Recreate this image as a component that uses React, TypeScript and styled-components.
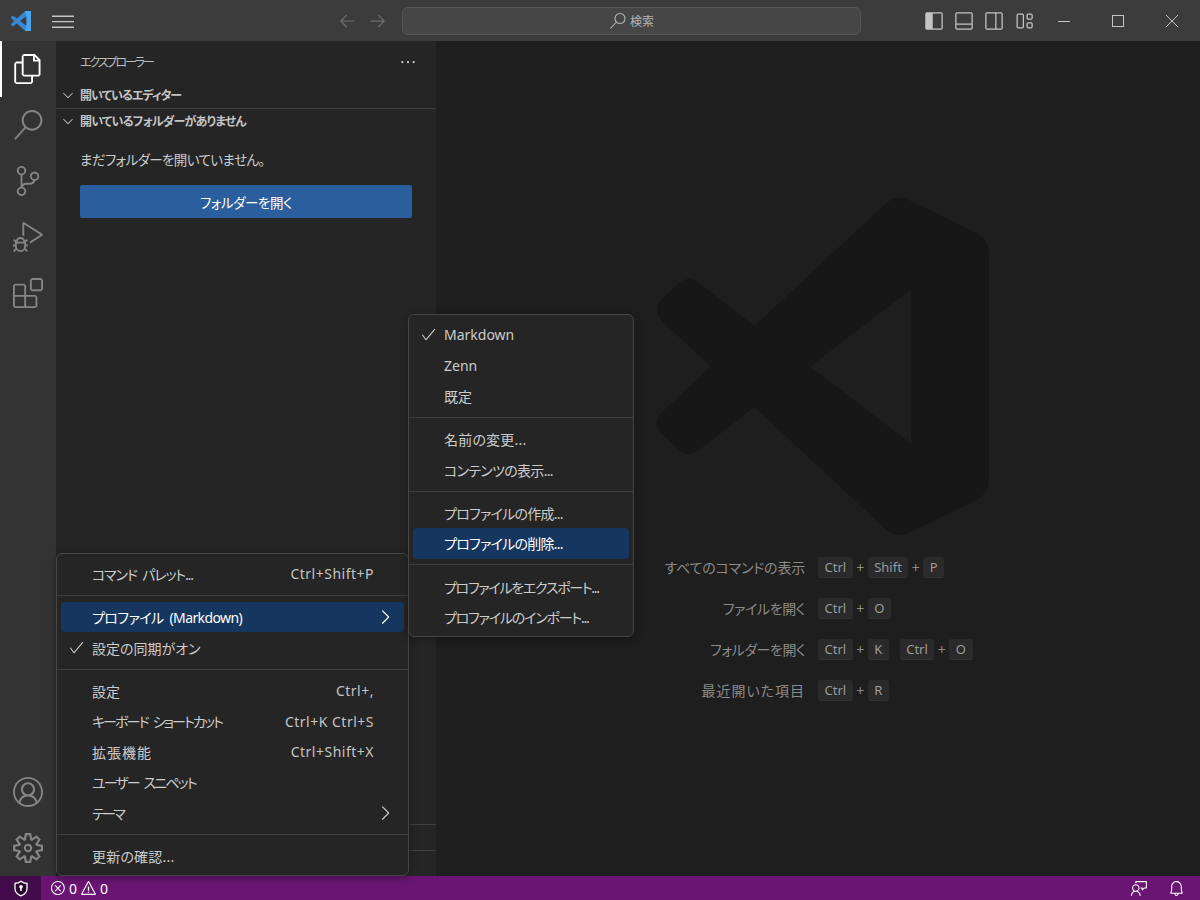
import React from "react";
import styled, { createGlobalStyle } from "styled-components";
import {
  VscAccount,
  VscArrowLeft,
  VscArrowRight,
  VscBell,
  VscCheck,
  VscChevronDown,
  VscChevronRight,
  VscDebugAlt,
  VscEllipsis,
  VscError,
  VscExtensions,
  VscFeedback,
  VscFiles,
  VscLayout,
  VscLayoutPanelOff,
  VscLayoutSidebarLeft,
  VscLayoutSidebarRightOff,
  VscMenu,
  VscSearch,
  VscSettingsGear,
  VscSourceControl,
  VscWarning,
} from "react-icons/vsc";

const LOGO_PATH =
  "M23.15 2.587L18.21.21a1.494 1.494 0 0 0-1.705.29l-9.46 8.63-4.12-3.128a.999.999 0 0 0-1.276.057L.327 7.261A1 1 0 0 0 .326 8.74L3.899 12 .326 15.26a1 1 0 0 0 .001 1.479L1.65 17.94a.999.999 0 0 0 1.276.057l4.12-3.128 9.46 8.63a1.492 1.492 0 0 0 1.704.29l4.942-2.377A1.5 1.5 0 0 0 24 20.06V3.939a1.5 1.5 0 0 0-.85-1.352zm-4.79 14.861L11.06 12l7.3-5.448v10.896z";

const GlobalStyle = createGlobalStyle`
  body {
    margin: 0;
    background: #1e1e1e;
    font-family: "Noto Sans", "Noto Sans CJK JP", sans-serif;
    font-feature-settings: "palt";
    color: #cccccc;
  }
`;

const Window = styled.div`
  position: relative;
  display: flex;
  flex-direction: column;
  width: 1200px;
  height: 900px;
  overflow: hidden;
`;

const TitleBar = styled.header`
  display: flex;
  align-items: center;
  flex: none;
  height: 41px;
  padding-right: 1px;
  background: #3c3c3c;
`;

const LeftGroup = styled.div`
  display: flex;
  align-items: center;
  width: 332px;
`;

const LogoBox = styled.div`
  display: flex;
  align-items: center;
  justify-content: center;
  width: 41px;
`;

const IconSlot = styled.div<{ $w?: number; $color?: string }>`
  display: flex;
  align-items: center;
  justify-content: center;
  flex: none;
  width: ${({ $w }) => $w ?? 30}px;
  color: ${({ $color }) => $color ?? "#c4c4c4"};
`;

const SearchBox = styled.div`
  display: flex;
  align-items: center;
  justify-content: center;
  gap: 3px;
  flex: none;
  box-sizing: border-box;
  width: 459px;
  height: 28px;
  margin-left: 10px;
  background: #464646;
  border: 1px solid #565656;
  border-radius: 6px;
  font-size: 12px;
  color: #b4b4b4;
`;

const Spacer = styled.div`
  flex: 1;
`;

const LayoutIcons = styled.div`
  display: flex;
  align-items: center;
  margin-right: -2px;
`;

const WindowControl = styled.div`
  display: flex;
  align-items: center;
  justify-content: center;
  width: 54px;
  height: 41px;
`;

const Main = styled.div`
  display: flex;
  flex: 1;
  min-height: 0;
`;

const ActivityBar = styled.nav`
  display: flex;
  flex-direction: column;
  flex: none;
  width: 56px;
  background: #333333;
`;

const ActivityItem = styled.div<{ $active?: boolean }>`
  display: flex;
  align-items: center;
  justify-content: center;
  flex: none;
  box-sizing: border-box;
  height: 56px;
  border-left: 2px solid ${({ $active }) => ($active ? "#ffffff" : "transparent")};
  padding-right: 2px;
  color: ${({ $active }) => ($active ? "#ffffff" : "#858585")};
`;

const ActivitySpacer = styled.div`
  flex: 1;
`;

const SideBar = styled.aside`
  display: flex;
  flex-direction: column;
  flex: none;
  width: 380px;
  background: #252525;
`;

const SideHeader = styled.div`
  display: flex;
  align-items: center;
  justify-content: space-between;
  flex: none;
  height: 41px;
  padding: 0 19px 0 24px;
  font-size: 12px;
  letter-spacing: -2.1px;
  color: #bbbbbb;
`;

const SectionHeader = styled.div<{ $line?: boolean; $tight: number }>`
  display: flex;
  align-items: center;
  gap: 4px;
  flex: none;
  box-sizing: border-box;
  height: 26px;
  padding: 0 0 ${({ $line }) => ($line ? 2 : 0)}px 4px;
  font-size: 12px;
  font-weight: 700;
  letter-spacing: ${({ $tight }) => $tight}px;
  color: #c4c4c4;
  border-top: ${({ $line }) => ($line ? "1px solid #3f3f3f" : "none")};
`;

const EmptyBody = styled.div`
  display: flex;
  flex-direction: column;
  flex: 1;
  padding: 0 24px;
`;

const EmptyText = styled.p`
  margin: 15px 0 0;
  font-size: 13.5px;
  line-height: 22px;
  letter-spacing: -0.6px;
  color: #cccccc;
`;

const OpenButton = styled.button`
  flex: none;
  width: 332px;
  height: 33px;
  margin-top: 14px;
  border: none;
  border-radius: 2px;
  background: #2b5e9c;
  color: #ffffff;
  font: inherit;
  font-size: 13.5px;
  letter-spacing: -0.4px;
  font-feature-settings: "palt";
`;

const CollapsedSection = styled.div`
  flex: none;
  height: 25px;
  border-top: 1px solid #3f3f3f;
`;

const Editor = styled.main`
  display: flex;
  flex-direction: column;
  flex: 1;
  padding: 156px 0 0 221px;
  background: #1e1e1e;
`;

const Watermark = styled.svg`
  display: block;
  flex: none;
  width: 332px;
  height: 339px;
  fill: #171717;
`;

const Shortcuts = styled.div`
  display: grid;
  grid-template-columns: 148px auto;
  grid-auto-rows: 41px;
  justify-content: start;
  column-gap: 13px;
  margin-top: 11px;
  font-size: 14px;
  color: #8a8a8a;
`;

const ShortcutLabel = styled.div<{ $tight?: number }>`
  display: flex;
  align-items: center;
  justify-content: flex-end;
  padding-bottom: 2px;
  white-space: nowrap;
  letter-spacing: ${({ $tight }) => $tight ?? 0}px;
`;

const KeyRow = styled.div`
  display: flex;
  align-items: center;
`;

const Key = styled.span`
  box-sizing: border-box;
  height: 21px;
  padding: 0 6.5px;
  background: #2a2a2a;
  border-bottom: 1px solid #333333;
  border-radius: 3px;
  font-size: 13px;
  line-height: 20px;
  color: #9a9a9a;
`;

const Plus = styled.span`
  width: 15px;
  text-align: center;
  font-size: 14px;
  color: #8a8a8a;
`;

const ChordGap = styled.span`
  width: 11px;
`;

const StatusBar = styled.footer`
  display: flex;
  align-items: center;
  flex: none;
  height: 24px;
  background: #6a1574;
  color: #ffffff;
  font-size: 14px;
`;

const RemoteBox = styled.div`
  display: flex;
  align-items: center;
  justify-content: center;
  width: 41px;
  height: 24px;
  background: #430b4c;
`;

const Problems = styled.div`
  display: flex;
  align-items: center;
  gap: 3px;
  margin-left: 9px;
`;

const StatusRight = styled.div`
  display: flex;
  align-items: center;
  gap: 20px;
  margin-left: auto;
  margin-right: 15px;
`;

const Menu = styled.div<{ $left: number; $top: number; $width: number }>`
  position: absolute;
  left: ${({ $left }) => $left}px;
  top: ${({ $top }) => $top}px;
  box-sizing: border-box;
  width: ${({ $width }) => $width}px;
  padding: 4.5px 4px 4px;
  background: #252525;
  border: 1px solid #454545;
  border-radius: 6px;
  box-shadow: 0 2px 8px rgba(0, 0, 0, 0.36);
  font-size: 14px;
`;

const MenuRow = styled.div<{ $selected?: boolean }>`
  display: grid;
  grid-template-columns: 31px 1fr auto 30px;
  align-items: center;
  height: 30.5px;
  border-radius: 4px;
  white-space: nowrap;
  background: ${({ $selected }) => ($selected ? "#15365e" : "transparent")};
  color: ${({ $selected }) => ($selected ? "#ffffff" : "#cccccc")};
`;

const MenuLabel = styled.span<{ $tight?: number }>`
  letter-spacing: ${({ $tight }) => $tight ?? 0}px;
  word-spacing: 3px;
`;

const MenuCheck = styled.span`
  display: flex;
  justify-content: center;
`;

const MenuArrow = styled.span`
  display: flex;
  justify-content: center;
  margin-right: 8px;
`;

const Shortcut = styled.span`
  color: #c4c4c4;
  font-size: 14px;
  letter-spacing: 0.5px;
`;

const MenuSep = styled.div`
  height: 1px;
  margin: 5.9px -4px;
  background: #3f3f3f;
`;

type RowProps = {
  label: string;
  keys?: string;
  tight?: number;
  checked?: boolean;
  selected?: boolean;
  submenu?: boolean;
};

const Row = ({ label, keys, tight, checked, selected, submenu }: RowProps) => (
  <MenuRow $selected={selected}>
    <MenuCheck>{checked && <VscCheck size={17} />}</MenuCheck>
    <MenuLabel $tight={tight}>{label}</MenuLabel>
    <Shortcut>{keys}</Shortcut>
    <MenuArrow>{submenu && <VscChevronRight size={22} />}</MenuArrow>
  </MenuRow>
);

const Keys = ({ list }: { list: string[] }) => (
  <>
    {list.map((k, i) => (
      <React.Fragment key={k + i}>
        {i > 0 && <Plus>+</Plus>}
        <Key>{k}</Key>
      </React.Fragment>
    ))}
  </>
);

const App = () => {
  return (
    <Window>
      <GlobalStyle />
      <TitleBar>
        <LeftGroup>
          <LogoBox>
            <svg width="20" height="20" viewBox="0 0 24 24">
              <path d={LOGO_PATH} fill="#3488d4" />
              <path d="M17 0h7v24h-7l1.3-6.5V6.5z" fill="#4aa5ee" />
              <path d="M18.4 17.4L11 12l7.4-5.4z" fill="#3c3c3c" />
            </svg>
          </LogoBox>
          <IconSlot $w={44}>
            <VscMenu size={22} />
          </IconSlot>
        </LeftGroup>
        <IconSlot $color="#6f6f6f">
          <VscArrowLeft size={19} />
        </IconSlot>
        <IconSlot $color="#6f6f6f">
          <VscArrowRight size={19} />
        </IconSlot>
        <SearchBox>
          <svg width="18" height="18" viewBox="0 0 18 18" fill="none" stroke="#b4b4b4" strokeWidth="1.1">
            <circle cx="11" cy="6.5" r="5" />
            <path d="M7.4 10L1.5 16.5" />
          </svg>
          検索
        </SearchBox>
        <Spacer />
        <LayoutIcons>
          <IconSlot>
            <VscLayoutSidebarLeft size={20} />
          </IconSlot>
          <IconSlot>
            <VscLayoutPanelOff size={20} />
          </IconSlot>
          <IconSlot>
            <VscLayoutSidebarRightOff size={20} />
          </IconSlot>
          <IconSlot>
            <VscLayout size={20} />
          </IconSlot>
        </LayoutIcons>
        <WindowControl>
          <svg width="12" height="12" viewBox="0 0 12 12" stroke="#c4c4c4" fill="none">
            <path d="M0 6.5h12" />
          </svg>
        </WindowControl>
        <WindowControl>
          <svg width="12" height="12" viewBox="0 0 12 12" stroke="#c4c4c4" fill="none">
            <rect x="0.5" y="0.5" width="11" height="11" />
          </svg>
        </WindowControl>
        <WindowControl>
          <svg width="14" height="14" viewBox="0 0 14 14" stroke="#c4c4c4" fill="none">
            <path d="M1 1l12 12M13 1L1 13" />
          </svg>
        </WindowControl>
      </TitleBar>

      <Main>
        <ActivityBar>
          <ActivityItem $active>
            <VscFiles size={30} />
          </ActivityItem>
          <ActivityItem>
            <VscSearch size={30} />
          </ActivityItem>
          <ActivityItem>
            <VscSourceControl size={30} />
          </ActivityItem>
          <ActivityItem>
            <VscDebugAlt size={30} />
          </ActivityItem>
          <ActivityItem>
            <VscExtensions size={30} />
          </ActivityItem>
          <ActivitySpacer />
          <ActivityItem>
            <VscAccount size={30} />
          </ActivityItem>
          <ActivityItem>
            <VscSettingsGear size={30} />
          </ActivityItem>
        </ActivityBar>

        <SideBar>
          <SideHeader>
            エクスプローラー
            <VscEllipsis size={18} color="#cccccc" />
          </SideHeader>
          <SectionHeader $tight={-1}>
            <VscChevronDown size={16} />
            開いているエディター
          </SectionHeader>
          <SectionHeader $line $tight={-0.8}>
            <VscChevronDown size={16} />
            開いているフォルダーがありません
          </SectionHeader>
          <EmptyBody>
            <EmptyText>まだフォルダーを開いていません。</EmptyText>
            <OpenButton>フォルダーを開く</OpenButton>
          </EmptyBody>
          <CollapsedSection />
          <CollapsedSection />
        </SideBar>

        <Editor>
          <Watermark viewBox="0 0 24 24" preserveAspectRatio="none">
            <path d={LOGO_PATH} />
          </Watermark>
          <Shortcuts>
            <ShortcutLabel $tight={-0.2}>すべてのコマンドの表示</ShortcutLabel>
            <KeyRow>
              <Keys list={["Ctrl", "Shift", "P"]} />
            </KeyRow>
            <ShortcutLabel $tight={-0.4}>ファイルを開く</ShortcutLabel>
            <KeyRow>
              <Keys list={["Ctrl", "O"]} />
            </KeyRow>
            <ShortcutLabel $tight={-0.5}>フォルダーを開く</ShortcutLabel>
            <KeyRow>
              <Keys list={["Ctrl", "K"]} />
              <ChordGap />
              <Keys list={["Ctrl", "O"]} />
            </KeyRow>
            <ShortcutLabel $tight={1}>最近開いた項目</ShortcutLabel>
            <KeyRow>
              <Keys list={["Ctrl", "R"]} />
            </KeyRow>
          </Shortcuts>
        </Editor>
      </Main>

      <StatusBar>
        <RemoteBox>
          <svg width="16" height="17" viewBox="0 0 16 17">
            <path
              d="M8 1.2c1.8 1.4 3.8 2.1 6 2.2v5c0 3.300-2.300 5.800-6 7.400-3.700-1.600-6-4.100-6-7.400v-5c2.200-.1 4.200-.8 6-2.200z"
              fill="#2b0730"
              stroke="#ffffff"
              strokeWidth="1.3"
            />
            <circle cx="8" cy="6.800" r="1.800" fill="#ffffff" />
            <path d="M7.200 7.500h1.600v3.600H7.200z" fill="#ffffff" />
          </svg>
        </RemoteBox>
        <Problems>
          <VscError size={16} />
          0
          <VscWarning size={17} />
          0
        </Problems>
        <StatusRight>
          <VscFeedback size={17} />
          <VscBell size={17} />
        </StatusRight>
      </StatusBar>

      <Menu $left={56} $top={553} $width={353}>
        <Row label="コマンド パレット..." tight={-1.15} keys="Ctrl+Shift+P" />
        <MenuSep />
        <Row label="プロファイル (Markdown)" tight={-0.6} selected submenu />
        <Row label="設定の同期がオン" checked />
        <MenuSep />
        <Row label="設定" keys="Ctrl+," />
        <Row label="キーボード ショートカット" tight={-1.9} keys="Ctrl+K Ctrl+S" />
        <Row label="拡張機能" tight={1} keys="Ctrl+Shift+X" />
        <Row label="ユーザー スニペット" tight={-1.9} />
        <Row label="テーマ" tight={-2.6} submenu />
        <MenuSep />
        <Row label="更新の確認..." tight={0.2} />
      </Menu>

      <Menu $left={408} $top={314} $width={226}>
        <Row label="Markdown" checked />
        <Row label="Zenn" />
        <Row label="既定" />
        <MenuSep />
        <Row label="名前の変更..." tight={0.2} />
        <Row label="コンテンツの表示..." tight={-0.7} />
        <MenuSep />
        <Row label="プロファイルの作成..." tight={-0.75} />
        <Row label="プロファイルの削除..." tight={-0.75} selected />
        <MenuSep />
        <Row label="プロファイルをエクスポート..." tight={-1.3} />
        <Row label="プロファイルのインポート..." tight={-1.2} />
      </Menu>
    </Window>
  );
};

export default App;
